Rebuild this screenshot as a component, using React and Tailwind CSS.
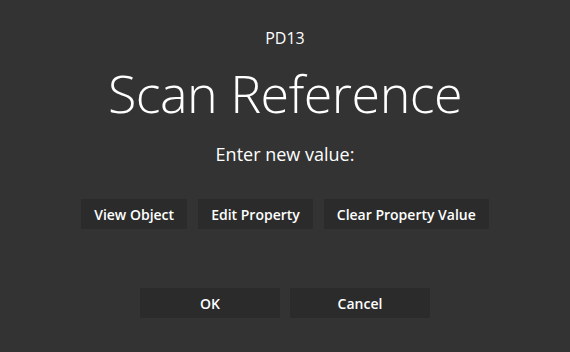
import React from 'react';

const font = { fontFamily: '"Open Sans", "Noto Sans", sans-serif' };

export default function App() {
  const acciones = ['View Object', 'Edit Property', 'Clear Property Value'];

  return (
    <div className="w-[570px] h-[352px] bg-[#333333] text-white flex flex-col items-center" style={font}>
      {/* TITULO */}
      <div className="mt-[28px] text-[16px] leading-[20px]">PD13</div>
      <h1 className="mt-[15px] text-[52px] leading-[60px] font-light tracking-[-0.5px]">Scan Reference</h1>
      <p className="mt-[19px] text-[18px] leading-[24px]">Enter new value:</p>

      {/* ACCIONES */}
      <div className="mt-[33px] flex gap-[11px]">
        {acciones.map((txt) => (
          <button key={txt} className="h-[30px] px-[13px] bg-[#2b2b2b] text-[14px] font-semibold">
            {txt}
          </button>
        ))}
      </div>

      {/* OK / CANCEL */}
      <div className="mt-[59px] flex gap-[10px]">
        <button className="w-[140px] h-[30px] bg-[#2b2b2b] text-[14px] font-semibold">OK</button>
        <button className="w-[140px] h-[30px] bg-[#2b2b2b] text-[14px] font-semibold">Cancel</button>
      </div>
    </div>
  );
}
